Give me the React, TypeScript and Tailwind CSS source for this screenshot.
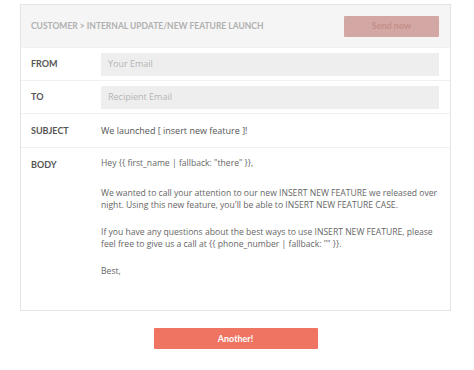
const bodyLines = [
  ['Hey {{ first_name | fallback: "there" }},'],
  [
    "We wanted to call your attention to our new INSERT NEW FEATURE we released over",
    "night. Using this new feature, you'll be able to INSERT NEW FEATURE CASE.",
  ],
  [
    "If you have any questions about the best ways to use INSERT NEW FEATURE, please",
    'feel free to give us a call at {{ phone_number | fallback: "" }}.',
  ],
  ["Best,"],
];

function FieldRow({ label, placeholder }: { label: string; placeholder: string }) {
  return (
    <div className="flex h-[33px] items-center border-t border-[#f0f0f0] pl-[10px] pr-[11px]">
      <span className="w-[70px] font-['Lato',sans-serif] text-[9px] font-bold text-[#555]">{label}</span>
      <div className="flex h-[23px] flex-1 items-center bg-[#eeeeee] px-[7px] font-['Open_Sans',sans-serif] text-[9px] text-[#b5b5b5]">
        {placeholder}
      </div>
    </div>
  );
}

export default function App() {
  return (
    <div className="h-[370px] w-[474px] bg-white pt-[4px]">
      <div className="ml-[20px] w-[431px] border border-[#e3e3e3]">
        <div className="flex h-[42px] items-center justify-between bg-[#f5f5f5] pl-[10px] pr-[11px]">
          <span className="font-['Lato',sans-serif] text-[8.5px] font-bold text-[#b0b0b0]">
            CUSTOMER &gt; INTERNAL UPDATE/NEW FEATURE LAUNCH
          </span>
          <button className="h-[21px] w-[95px] rounded-[1px] bg-[#d3a7a3] font-['Lato',sans-serif] text-[9px] font-bold text-[#c48f8a]">
            Send now
          </button>
        </div>
        <FieldRow label="FROM" placeholder="Your Email" />
        <FieldRow label="TO" placeholder="Recipient Email" />
        <div className="flex h-[34px] items-center border-t border-[#f0f0f0] pl-[10px] pr-[11px]">
          <span className="w-[70px] font-['Lato',sans-serif] text-[9px] font-bold text-[#555]">SUBJECT</span>
          <span className="font-['Open_Sans',sans-serif] text-[9px] text-[#555]">We launched [ insert new feature ]!</span>
        </div>
        <div className="flex h-[163px] border-t border-[#f0f0f0] pl-[10px] pr-[11px] pt-[9px]">
          <span className="w-[70px] pt-[1px] font-['Lato',sans-serif] text-[9px] font-bold text-[#555]">BODY</span>
          <div className="flex flex-col gap-[14px] font-['Open_Sans',sans-serif] text-[8.6px] leading-[12.5px] text-[#666]">
            {bodyLines.map((para, i) => (
              <p key={i} className={i === 1 ? "mt-[3px]" : ""}>
                {para.map((line, j) => (
                  <span key={j} className="block whitespace-nowrap">
                    {line}
                  </span>
                ))}
              </p>
            ))}
          </div>
        </div>
      </div>
      <div className="mt-[17px] flex justify-center">
        <button className="ml-[-3px] h-[21px] w-[164px] rounded-[1px] bg-[#f07462] font-['Lato',sans-serif] text-[9px] font-bold text-white">
          Another!
        </button>
      </div>
    </div>
  );
}
